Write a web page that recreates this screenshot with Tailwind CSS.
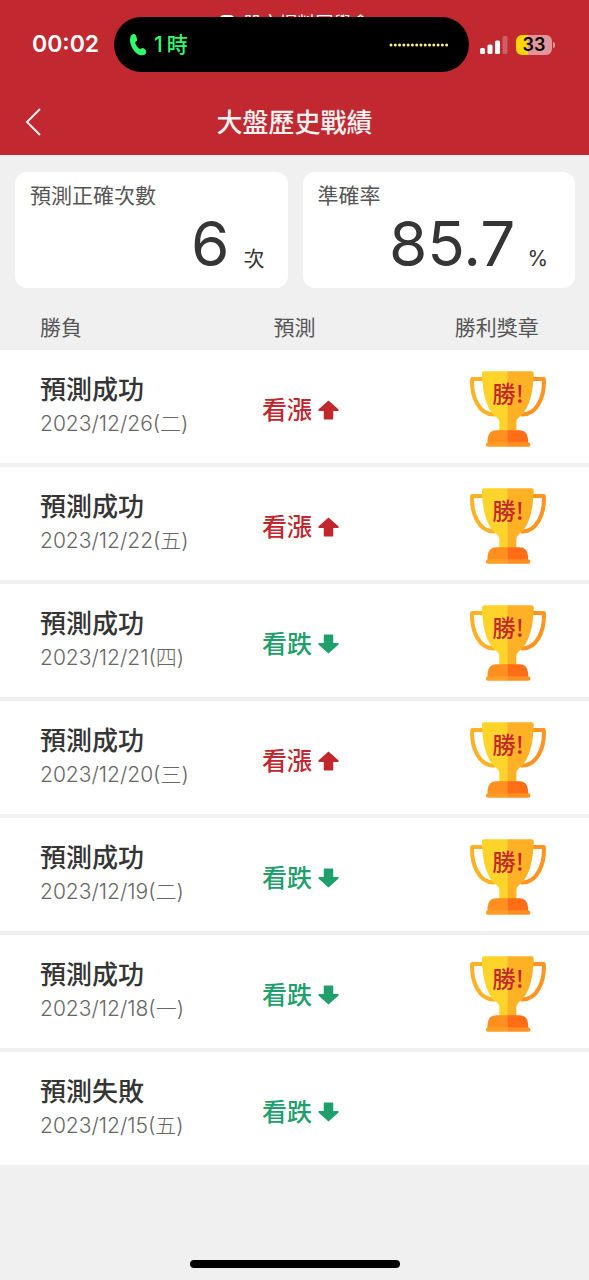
<!DOCTYPE html>
<html lang="zh-Hant">
<head>
<meta charset="utf-8">
<meta name="viewport" content="width=device-width, initial-scale=1">
<title>大盤歷史戰績</title>
<script src="https://cdn.jsdelivr.net/npm/@tailwindcss/browser@4"></script>
</head>
<body class="flex min-h-screen flex-col bg-[#f0f0f0] font-['Inter','Noto_Sans_CJK_TC',sans-serif] text-[#353535]">

<!-- Shared icon shapes -->
<svg class="hidden" aria-hidden="true">
  <symbol id="arrow-up" viewBox="0 0 62 58">
    <path d="M31 1 60 27q3 5-2 5H45v23q0 2-2 2H19q-2 0-2-2V32H4q-5 0-2-5Z" fill="currentColor"/>
  </symbol>
  <symbol id="arrow-down" viewBox="0 0 62 58">
    <path d="M31 57 60 31q3-5-2-5H45V3q0-2-2-2H19q-2 0-2 2v23H4q-5 0-2 5Z" fill="currentColor"/>
  </symbol>
  <symbol id="trophy" viewBox="30 32 226 227">
    <path d="M70 56H36C33 105 55 165 104 162" fill="none" stroke="#ffb125" stroke-width="12" stroke-linejoin="round"/>
    <path d="M215 56h35c3 49-19 109-68 106" fill="none" stroke="#ff9420" stroke-width="12" stroke-linejoin="round"/>
    <path d="M71 33h71v180h-25v-28q0-8-7-14C73 143 67 85 65 40q0-7 6-7Z" fill="#ffd42a"/>
    <path d="M141 33h73q6 0 6 7c-2 45-8 103-45 131q-7 6-7 14v28h-27Z" fill="#ffb125"/>
    <path d="M108 209h34v39H82v-12q2-27 26-27Z" fill="#ff8f1f"/>
    <path d="M141 209h36q24 0 26 27v12h-62Z" fill="#ff6d17"/>
    <path d="M83 245h59v13H83q-6 0-6-6t6-7Z" fill="#ff9f24"/>
    <path d="M141 245h62q7 1 7 7t-7 6h-62Z" fill="#ff8f1f"/>
    <text x="96" y="129" font-size="70" font-weight="500" font-family="'Noto Sans CJK TC', sans-serif" fill="#c1272d">勝!</text>
  </symbol>
</svg>

<header class="bg-[#c1282f] text-white">
  <div class="relative h-22 overflow-hidden">
    <!-- App name partly covered by the island -->
    <div class="absolute inset-x-0 top-3 flex justify-center gap-2.5 text-lg leading-6">
      <span class="mt-[3px] size-3.5 rounded-sm bg-white"></span>
      <span>股市爆料同學會</span>
    </div>
    <div class="relative grid grid-cols-[114px_1fr_120px] items-center pt-[17px]">
      <time class="pl-8 text-[23px] font-semibold">00:02</time>
      <div class="flex h-[55px] items-center rounded-full bg-black pr-5 pl-4">
        <svg class="h-6 w-4" viewBox="0 0 50 70" fill="#30fa6c" aria-hidden="true">
          <path d="M5 4C9 0 16 0 18 4l4 12c1 4 0 6-3 8s-3 5-1 9c3 6 6 10 10 13 3 2 5 2 8 0s6-2 9 1l5 5c3 3 2 7-1 10-6 7-17 7-26 1C11 54 1 37 0 20 0 12 2 7 5 4Z"/>
        </svg>
        <span class="ml-2 flex gap-1 text-[21px] font-medium text-[#30fa6c]"><span>1</span><span>時</span></span>
        <svg class="ml-auto h-1 w-15" viewBox="0 0 60 4" aria-hidden="true">
          <path d="M2 2h56" stroke="#fbf47a" stroke-width="3" stroke-linecap="round" stroke-dasharray="0 4.28"/>
        </svg>
      </div>
      <div class="flex items-center gap-2 pl-[11px]">
        <svg class="h-[18px] w-7" viewBox="0 0 28 18" fill="#fff" aria-hidden="true">
          <rect x="0" y="12" width="5" height="6" rx="1.5"/>
          <rect x="7.500" y="8.500" width="5" height="9.500" rx="1.500"/>
          <rect x="15" y="4.500" width="5" height="13.500" rx="1.500"/>
          <rect x="22.500" y="0" width="5" height="18" rx="1.500" opacity=".25"/>
        </svg>
        <div class="flex items-center gap-px">
          <div class="flex h-5 w-9 items-center justify-center rounded-md bg-linear-to-r from-[#ffd60a] from-33% to-[#e2959a] to-33% text-lg leading-5 font-semibold text-black">33</div>
          <span class="h-1.5 w-0.5 rounded-r-full bg-[#e2959a]"></span>
        </div>
      </div>
    </div>
  </div>
  <nav class="grid h-[67px] grid-cols-[64px_1fr_64px] items-center text-[#f2f2f2]">
    <button type="button" aria-label="返回" class="flex h-full items-center pl-6">
      <svg class="h-7 w-[18px]" viewBox="0 0 18 28" fill="none" stroke="currentColor" stroke-width="2" aria-hidden="true"><path d="M16 1 3 14l13 13"/></svg>
    </button>
    <h1 class="pt-0.5 text-center text-[26px] leading-9 font-medium">大盤歷史戰績</h1>
  </nav>
</header>

<main>
  <section class="grid grid-cols-2 gap-[15px] pt-[17px] pr-3.5 pl-[15px]">
    <div class="h-[116px] rounded-xl bg-white px-[15px] pt-2">
      <h2 class="text-[21px] leading-8 font-normal text-[#555]">預測正確次數</h2>
      <p class="flex items-baseline justify-end gap-3.5 pr-2 text-[62px] leading-16">6<span class="text-[21px]">次</span></p>
    </div>
    <div class="h-[116px] rounded-xl bg-white px-[15px] pt-2">
      <h2 class="text-[21px] leading-8 font-normal text-[#555]">準確率</h2>
      <p class="flex items-baseline justify-end gap-3 pr-3 text-[62px] leading-16">85.7<span class="text-[21px]">%</span></p>
    </div>
  </section>

  <table class="w-full table-fixed border-separate border-spacing-0">
    <thead>
      <tr class="h-[62px] text-[21px] leading-8 text-[#555]">
        <th scope="col" class="pt-[18px] pl-10 text-left font-normal">勝負</th>
        <th scope="col" class="pt-[18px] text-center font-normal">預測</th>
        <th scope="col" class="pt-[18px] pl-3 text-center font-normal">勝利獎章</th>
      </tr>
    </thead>
    <tbody id="records"></tbody>
  </table>
</main>

<footer class="mt-auto flex justify-center pb-3"><span class="h-2 w-[210px] rounded-full bg-black"></span></footer>

<script>
const records = [
  ['預測成功', '2023/12/26(二)', 'up', true],
  ['預測成功', '2023/12/22(五)', 'up', true],
  ['預測成功', '2023/12/21(四)', 'down', true],
  ['預測成功', '2023/12/20(三)', 'up', true],
  ['預測成功', '2023/12/19(二)', 'down', true],
  ['預測成功', '2023/12/18(一)', 'down', true],
  ['預測失敗', '2023/12/15(五)', 'down', false],
];
const calls = {
  up: ['看漲', 'text-[#c1272d]'],
  down: ['看跌', 'text-[#1f9f6c]'],
};
document.getElementById('records').innerHTML = records.map(([result, date, dir, won]) => `
  <tr class="h-[117px] bg-white *:border-b-4 *:border-[#f0f0f0]">
    <td class="pb-0.5 pl-10 whitespace-nowrap">
      <div class="text-[26px] leading-9 font-medium">${result}</div>
      <div class="text-[21px] leading-8 font-light text-[#666]">${date}</div>
    </td>
    <td class="pt-1.5 pl-3">
      <div class="flex items-center justify-center gap-1.5 text-[25px] leading-9 font-medium ${calls[dir][1]}">
        ${calls[dir][0]}<svg class="h-5 w-[21px]" aria-hidden="true"><use href="#arrow-${dir}"/></svg>
      </div>
    </td>
    <td class="pt-1 pl-[34px]">${won ? '<svg class="mx-auto size-[76px]" role="img" aria-label="勝利獎章"><use href="#trophy"/></svg>' : ''}</td>
  </tr>`).join('');
</script>
</body>
</html>
